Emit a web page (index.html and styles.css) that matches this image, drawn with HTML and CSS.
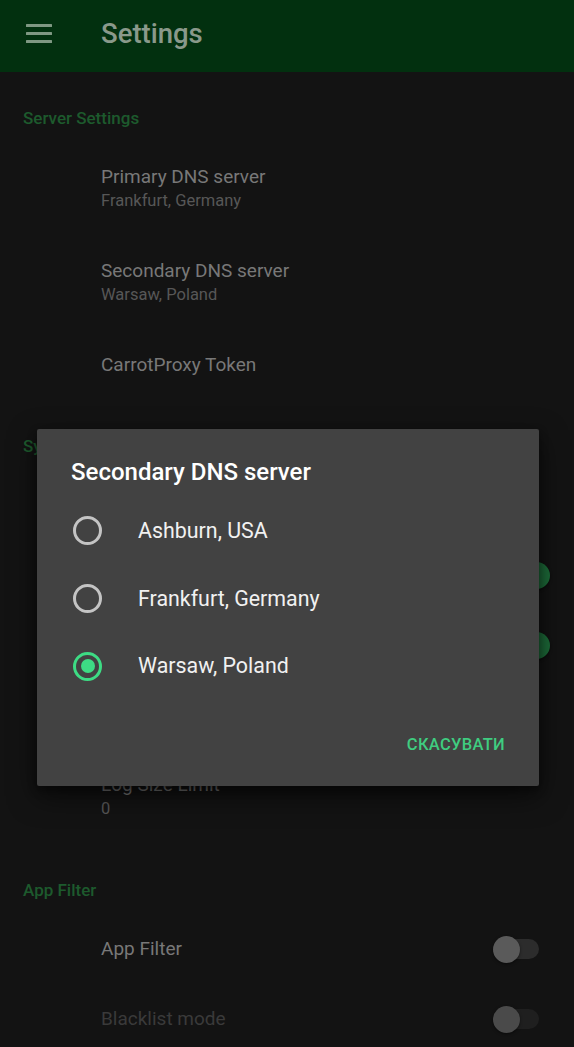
FILE: index.html
```html
<!DOCTYPE html>
<html lang="en">
<head>
<meta charset="utf-8">
<title>Settings</title>
<link rel="stylesheet" href="styles.css">
</head>
<body>
<div class="screen">
  <header class="appbar">
    <svg class="menu-icon" width="26" height="19" viewBox="0 0 26 19" aria-hidden="true">
      <rect x="0" y="0" width="26" height="3" rx="0.5"/>
      <rect x="0" y="8" width="26" height="3" rx="0.5"/>
      <rect x="0" y="16" width="26" height="3" rx="0.5"/>
    </svg>
    <h1 class="appbar-title">Settings</h1>
  </header>

  <main class="prefs">
    <section class="group">
      <h3 class="group-title">Server Settings</h3>
      <div class="item">
        <div class="item-text">
          <div class="item-title">Primary DNS server</div>
          <div class="item-summary">Frankfurt, Germany</div>
        </div>
      </div>
      <div class="item">
        <div class="item-text">
          <div class="item-title">Secondary DNS server</div>
          <div class="item-summary">Warsaw, Poland</div>
        </div>
      </div>
      <div class="item">
        <div class="item-text">
          <div class="item-title">CarrotProxy Token</div>
        </div>
      </div>
    </section>

    <section class="group">
      <h3 class="group-title">System Settings</h3>
      <div class="item">
        <div class="item-text">
          <div class="item-title">Theme</div>
        </div>
      </div>
      <div class="item">
        <div class="item-text">
          <div class="item-title">Start on boot</div>
        </div>
        <span class="switch is-on"><span class="track"></span><span class="thumb"></span></span>
      </div>
      <div class="item">
        <div class="item-text">
          <div class="item-title">Query log</div>
        </div>
        <span class="switch is-on"><span class="track"></span><span class="thumb"></span></span>
      </div>
      <div class="item">
        <div class="item-text">
          <div class="item-title">Clear log</div>
        </div>
      </div>
      <div class="item">
        <div class="item-text">
          <div class="item-title">Log Size Limit</div>
          <div class="item-summary">0</div>
        </div>
      </div>
    </section>

    <section class="group">
      <h3 class="group-title">App Filter</h3>
      <div class="item">
        <div class="item-text">
          <div class="item-title">App Filter</div>
        </div>
        <span class="switch"><span class="track"></span><span class="thumb"></span></span>
      </div>
      <div class="item is-disabled">
        <div class="item-text">
          <div class="item-title">Blacklist mode</div>
        </div>
        <span class="switch"><span class="track"></span><span class="thumb"></span></span>
      </div>
    </section>
  </main>

  <div class="dialog" role="dialog">
    <h2 class="dialog-title">Secondary DNS server</h2>
    <ul class="choices">
      <li class="choice"><span class="radio"></span><span class="choice-label">Ashburn, USA</span></li>
      <li class="choice"><span class="radio"></span><span class="choice-label">Frankfurt, Germany</span></li>
      <li class="choice"><span class="radio is-checked"></span><span class="choice-label">Warsaw, Poland</span></li>
    </ul>
    <div class="dialog-actions">
      <button class="text-button" type="button">СКАСУВАТИ</button>
    </div>
  </div>
</div>
</body>
</html>
```

FILE: styles.css
```css
* {
  box-sizing: border-box;
}

html, body {
  margin: 0;
  padding: 0;
  background: #131313;
}

body {
  font-family: Roboto, "Noto Sans", "Liberation Sans", sans-serif;
  width: 574px;
  height: 1047px;
  overflow: hidden;
}

.screen {
  position: relative;
  width: 574px;
  height: 1047px;
  overflow: hidden;
  background: #131313;
}

/* App bar */
.appbar {
  height: 72px;
  background: #02300f;
  display: flex;
  align-items: center;
  padding: 0 0 4px 26px;
  gap: 49px;
}

.menu-icon {
  fill: #7f9883;
  flex: none;
  margin-top: -2px;
}

.appbar-title {
  margin: 0;
  font-size: 27.5px;
  font-weight: 500;
  color: #8a998b;
  line-height: 32px;
}

/* Preference list */
.prefs {
  display: flex;
  flex-direction: column;
}

.group {
  display: flex;
  flex-direction: column;
}

.group-title {
  margin: 0;
  padding: 36px 23px 14px;
  font-size: 17px;
  font-weight: 500;
  line-height: 20px;
  color: #1d5a2d;
}

.item {
  display: flex;
  align-items: center;
  padding: 23px 24px 23px 101px;
}

.item-text {
  flex: 1;
  min-width: 0;
}

.item-title {
  font-size: 19px;
  line-height: 24px;
  color: #787878;
}

.item-summary {
  font-size: 16.5px;
  line-height: 24px;
  color: #575757;
}

.is-disabled .item-title {
  color: #3a3a3a;
}

/* Switch */
.switch {
  position: relative;
  width: 57px;
  height: 24px;
  flex: none;
}

.switch .track {
  position: absolute;
  left: 6px;
  top: 2px;
  width: 40px;
  height: 20px;
  border-radius: 10px;
  background: #2c2c2c;
}

.switch .thumb {
  position: absolute;
  left: 0;
  top: -1.5px;
  width: 27px;
  height: 27px;
  border-radius: 50%;
  background: #5a5a5a;
  box-shadow: 0 1px 3px rgba(0, 0, 0, 0.5);
}

.is-disabled .switch .thumb {
  background: #4a4a4a;
}

.is-disabled .switch .track {
  background: #1f1f1f;
}

.switch.is-on .track {
  background: #103d1f;
}

.switch.is-on .thumb {
  left: 30px;
  background: #1d6b39;
}

/* Dialog */
.dialog {
  position: absolute;
  left: 37px;
  top: 429px;
  width: 502px;
  height: 357px;
  background: #424242;
  border-radius: 2px;
  box-shadow: 0 10px 28px rgba(0, 0, 0, 0.55), 0 4px 10px rgba(0, 0, 0, 0.4);
  display: flex;
  flex-direction: column;
}

.dialog-title {
  margin: 0;
  padding: 27px 34px 0;
  font-size: 24px;
  font-weight: 500;
  line-height: 32px;
  color: #ffffff;
}

.choices {
  list-style: none;
  margin: 9px 0 0;
  padding: 0;
  display: flex;
  flex-direction: column;
}

.choice {
  height: 67.7px;
  display: flex;
  align-items: center;
  gap: 36px;
  padding-left: 36px;
}

.radio {
  position: relative;
  width: 29px;
  height: 29px;
  border-radius: 50%;
  border: 3px solid #c4c4c4;
  flex: none;
}

.radio.is-checked {
  border-color: #3ddc84;
}

.radio.is-checked::after {
  content: "";
  position: absolute;
  left: 4.5px;
  top: 4.5px;
  width: 14px;
  height: 14px;
  border-radius: 50%;
  background: #3ddc84;
}

.choice-label {
  font-size: 21.4px;
  line-height: 28px;
  color: #f1f1f1;
}

.dialog-actions {
  display: flex;
  justify-content: flex-end;
  padding: 20px 26px 18px;
}

.text-button {
  height: 48px;
  padding: 0 8px;
  border: 0;
  background: transparent;
  font-family: Roboto, "Noto Sans", "Liberation Sans", sans-serif;
  font-size: 16.5px;
  font-weight: 500;
  letter-spacing: 0.3px;
  color: #3fcd80;
}
```
